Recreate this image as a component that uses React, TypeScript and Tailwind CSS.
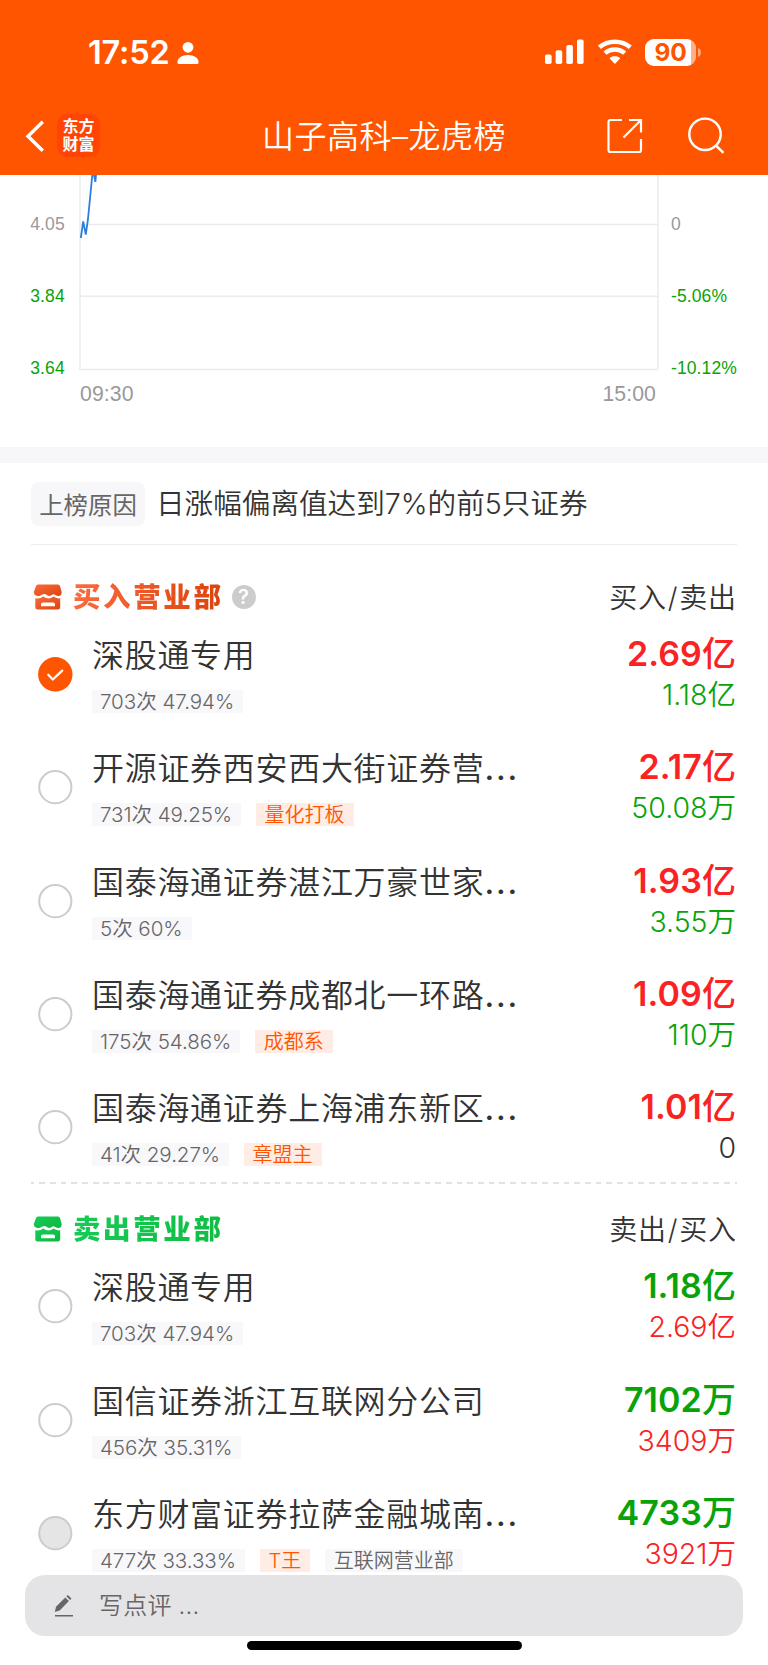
import React from "react";

type Tag = { text: string; tone: "hot" | "plain" };
type Seat = {
  name: string;
  stat: string;
  tags?: Tag[];
  main: string;
  sub: string;
  state?: "checked" | "disabled";
};

const buyers: Seat[] = [
  { name: "深股通专用", stat: "703次 47.94%", main: "2.69亿", sub: "1.18亿", state: "checked" },
  { name: "开源证券西安西大街证券营…", stat: "731次 49.25%", tags: [{ text: "量化打板", tone: "hot" }], main: "2.17亿", sub: "50.08万" },
  { name: "国泰海通证券湛江万豪世家…", stat: "5次 60%", main: "1.93亿", sub: "3.55万" },
  { name: "国泰海通证券成都北一环路…", stat: "175次 54.86%", tags: [{ text: "成都系", tone: "hot" }], main: "1.09亿", sub: "110万" },
  { name: "国泰海通证券上海浦东新区…", stat: "41次 29.27%", tags: [{ text: "章盟主", tone: "hot" }], main: "1.01亿", sub: "0" },
];

const sellers: Seat[] = [
  { name: "深股通专用", stat: "703次 47.94%", main: "1.18亿", sub: "2.69亿" },
  { name: "国信证券浙江互联网分公司", stat: "456次 35.31%", main: "7102万", sub: "3409万" },
  {
    name: "东方财富证券拉萨金融城南…",
    stat: "477次 33.33%",
    tags: [
      { text: "T王", tone: "hot" },
      { text: "互联网营业部", tone: "plain" },
    ],
    main: "4733万",
    sub: "3921万",
    state: "disabled",
  },
];

function StatusBar() {
  return (
    <div className="flex h-[104px] items-center justify-between pt-px pl-[88px] pr-[66px]">
      <div className="flex items-center">
        <span className="mt-[2px] w-[82px] text-[32.500px] leading-none font-semibold tracking-[-0.200px]">17:52</span>
        <svg className="ml-[7px]" width="22" height="24" viewBox="0 0 22 24" fill="white">
          <circle cx="11" cy="6.300" r="5.400" />
          <path d="M.4 21.4C.4 17 5 14.1 11 14.1S21.600 17 21.600 21.400C21.600 22.600 20.800 23 19.800 23H2.200C1.200 23 .4 22.600.4 21.400Z" />
        </svg>
      </div>
      <div className="flex items-center">
        <svg className="mt-[-1px]" width="40" height="26" viewBox="0 0 40 26" fill="white">
          <rect x="1" y="15.500" width="6.600" height="9.500" rx="1.800" />
          <rect x="11.600" y="11.300" width="6.600" height="13.700" rx="1.800" />
          <rect x="22.300" y="6" width="6.600" height="19" rx="1.800" />
          <rect x="33" y=".5" width="6.600" height="24.500" rx="1.800" />
        </svg>
        <svg className="mt-[-1px] ml-[13px]" width="36" height="26" viewBox="0 0 36 26" fill="none">
          <path d="M2.400 8.300C11 .8 24.700.8 33.300 8.300" stroke="white" strokeWidth="4.600" />
          <path d="M8 14.200C13.700 9.300 22 9.300 27.700 14.200" stroke="white" strokeWidth="4.400" />
          <path d="M12.500 19.300C15.500 16.700 20.200 16.700 23.200 19.300L17.900 25Z" fill="white" />
        </svg>
        <div className="mt-[-1px] ml-[12px] flex h-[27px] w-[51px] items-center justify-center rounded-[9px] bg-[linear-gradient(90deg,#fff_46px,#ffb08a_46px)] pt-px text-[24.500px] leading-none font-bold tracking-[-0.300px] text-[#ff5500]">
          90
        </div>
        <svg className="ml-[2px]" width="4" height="9" viewBox="0 0 4 9" fill="#ffa880">
          <path d="M0 0C4 1.500 4 7.500 0 9Z" />
        </svg>
      </div>
    </div>
  );
}

function NavBar() {
  return (
    <div className="flex h-[71px] items-start">
      <svg className="mt-[16px] ml-[25px]" width="20" height="33" viewBox="0 0 20 33" fill="none" stroke="white" strokeWidth="3.400">
        <path d="M17.800 1.800 3 16.200 17.800 30.700" />
      </svg>
      <div className="mt-[10px] ml-[12px] flex h-[43px] w-[43px] flex-col items-center justify-center rounded-[10px] bg-[#ff4405] text-[16px] leading-[17.500px] font-bold">
        <span>东方</span>
        <span>财富</span>
      </div>
      <h1 className="mt-[10px] ml-[162px] w-[246px] text-[32px] leading-[46px] font-[350] tracking-[0.500px] whitespace-nowrap">山子高科–龙虎榜</h1>
      <svg className="mt-[14px] ml-[98.500px]" width="36" height="36" viewBox="0 0 36 36" fill="none" stroke="white" strokeWidth="2.200">
        <path d="M15 2H3.500Q1.500 2 1.500 4V32Q1.500 34 3.500 34H32Q34 34 34 32V21M22 2H34V14.500M33.500 2.500 16.500 19.500" />
      </svg>
      <svg className="mt-[13px] ml-[44px]" width="38" height="38" viewBox="0 0 38 38" fill="none" stroke="white" strokeWidth="2.400">
        <circle cx="18" cy="17.300" r="15.700" />
        <path d="m28.800 28.300 7.700 7.500" />
      </svg>
    </div>
  );
}

function Chart() {
  return (
    <section className="flex h-[272px] font-[Liberation_Sans,Arial,sans-serif] text-[17.500px] leading-[20px]">
      <div className="flex w-[65px] flex-col items-end pt-[39px] text-[#09a309]">
        <span className="tracking-[0.200px] text-[#999]">4.05</span>
        <span className="mt-[52px] tracking-[0.200px]">3.84</span>
        <span className="mt-[52px] tracking-[0.200px]">3.64</span>
      </div>
      <div className="ml-[14px] w-[581px]">
        <svg className="block" width="581" height="196" viewBox="0 0 581 196" fill="none">
          <path d="M1 0V194.500M579 0V194.500M0 49.500H579M0 121.300H579M0 194.500H579" stroke="#ebebeb" strokeWidth="1.500" />
          <path d="M1.800 63 4.200 46.500 6.800 59.500 9 44 13.300 0M15 0 16.400 7M16.400 7 17 0" stroke="#2c7fe0" strokeWidth="1.800" />
        </svg>
        <div className="mt-[11px] flex justify-between pr-[4px] pl-[1px] text-[21.200px] leading-[24px] tracking-[0.100px] text-[#999]">
          <span>09:30</span>
          <span>15:00</span>
        </div>
      </div>
      <div className="flex flex-col pt-[39px] pl-[11px] text-[#09a309]">
        <span className="text-[#999]">0</span>
        <span className="mt-[52px] tracking-[0.100px]">-5.06%</span>
        <span className="mt-[52px] tracking-[0.100px]">-10.12%</span>
      </div>
    </section>
  );
}

function Shop({ color, dark }: { color: string; dark: string }) {
  const id = "shop" + color.slice(1);
  return (
    <svg className="ml-[1px]" width="30" height="26" viewBox="0 0 30 26">
      <defs>
        <linearGradient id={id} x1="0" y1="0" x2="1" y2="1">
          <stop offset="0" stopColor={color} />
          <stop offset="1" stopColor={dark} />
        </linearGradient>
      </defs>
      <path fill={"url(#" + id + ")"} d="M5 .5H25Q26.500.5 27 2L28.700 8Q28.700 11.800 25.500 12Q23.500 12 22 10.700Q20.500 9.700 19 10.700Q17 12.600 14.700 11.500L12.500 10.300Q10.500 9.400 8.500 11Q7 12.300 4.500 12Q.8 11.500.8 8L3 2Q3.500.5 5 .5Z" />
      <path fill={"url(#" + id + ")"} fillRule="evenodd" d="M2.300 14.200Q7 15 10.300 12.500Q15.500 16.500 20.500 12.600Q23.500 15 27.200 14.200V23Q27.200 25.500 25 25.500H4.500Q2.300 25.500 2.300 23ZM10 18.400Q8 18.400 8 20V22.300H22V20Q22 18.400 20 18.400Z" />
    </svg>
  );
}

function SectionHead({ kind }: { kind: "buy" | "sell" }) {
  const buy = kind === "buy";
  return (
    <div className="flex h-[46px] items-center pl-px">
      <Shop color={buy ? "#f86a3c" : "#18cb58"} dark={buy ? "#df450d" : "#0cb840"} />
      <h2
        className={
          "ml-[10px] bg-clip-text text-[27.500px] leading-[40px] font-black tracking-[2.600px] text-transparent " +
          (buy ? "bg-[linear-gradient(90deg,#fa6b41,#dd430b)]" : "bg-[linear-gradient(90deg,#17ca55,#0fbd43)]")
        }
      >
        {buy ? "买入营业部" : "卖出营业部"}
      </h2>
      {buy && (
        <span className="ml-[8px] flex h-[24px] w-[24px] items-center justify-center rounded-full bg-[#ccc] text-[20px] leading-none font-semibold text-white">?</span>
      )}
      <span className="mt-[2px] ml-auto text-[28px] leading-[40px] font-[350] tracking-[0.900px] text-[#333]">
        {buy ? "买入" : "卖出"}
        <span className="px-[0.800px]">/</span>
        {buy ? "卖出" : "买入"}
      </span>
    </div>
  );
}

function Radio({ state }: { state?: Seat["state"] }) {
  if (state === "checked")
    return (
      <svg width="36" height="36" viewBox="0 0 36 36" fill="none">
        <circle cx="18.300" cy="18.300" r="17.200" fill="#ff5500" />
        <path d="m11.300 18.800 4.500 4.700 9.400-8.900" stroke="white" strokeWidth="2.300" strokeLinecap="round" strokeLinejoin="round" />
      </svg>
    );
  return (
    <svg width="36" height="36" viewBox="0 0 36 36" fill="none">
      <circle cx="18.300" cy="18.200" r="16.100" stroke="#ccc" strokeWidth="2" fill={state ? "#e5e5e5" : "white"} />
    </svg>
  );
}

function SeatRow({ seat, kind }: { seat: Seat; kind: "buy" | "sell" }) {
  const mainColor = kind === "buy" ? "text-[#f92323]" : "text-[#09a309]";
  const subColor = seat.sub === "0" ? "text-[#333]" : kind === "buy" ? "text-[#09a309]" : "text-[#f92323]";
  const clipped = seat.name.endsWith("…");
  return (
    <li className="flex h-[113.300px]">
      <div className="w-[61px] pt-[20px] pl-[6px]">
        <Radio state={seat.state} />
      </div>
      <div className="w-[440px] whitespace-nowrap">
        <div className="h-[54px] pt-px text-[32px] leading-[38px] font-[350] tracking-[0.700px] text-[#333]">
          {clipped ? seat.name.slice(0, -1) : seat.name}
          {clipped && <span className="font-medium tracking-[1.900px]">...</span>}
        </div>
        <div className="flex gap-[15px] text-[20px] leading-[25px]">
          <span className="h-[23px] bg-[#f8f8fb] pr-[9px] pl-[8px] text-[20.600px] leading-[24px] font-[350] tracking-[-0.080px] text-[#666]">{seat.stat}</span>
          {seat.tags?.map((t) => (
            <span key={t.text} className={"h-[23px] pr-[9px] pl-[8.500px] font-[350] " + (t.tone === "hot" ? "bg-[#ffece4] text-[#ff5500]" : "bg-[#f8f8fb] text-[#666]")}>
              {t.text}
            </span>
          ))}
        </div>
      </div>
      <div className="flex flex-1 flex-col items-end pr-px">
        <span className={"h-[39px] text-[34px] leading-[35px] font-semibold tracking-[0.100px] " + mainColor}>
          {seat.main.slice(0, -1)}
          <span className="font-medium">{seat.main.slice(-1)}</span>
        </span>
        <span className={"text-[28.500px] leading-[39px] font-[350] " + subColor}>{seat.sub}</span>
      </div>
    </li>
  );
}

function Composer() {
  return (
    <footer className="absolute inset-x-0 bottom-0 flex h-[90px] flex-col items-center bg-[linear-gradient(transparent_30px,#fff_30px)]">
      <div className="flex h-[61px] w-[718px] items-center rounded-[20px] bg-[#e4e4e6] pl-[29px] text-[24px] text-[#666]">
        <svg width="20" height="24" viewBox="0 0 20 24" fill="#666">
          <path d="M2 12.800 11.300 3.500 14.900 7.100 5.700 16.400.8 18ZM12.400 2.300 13.800.9 17.500 4.600 16.100 6ZM1 21H19V22.600H1Z" />
        </svg>
        <span className="ml-[25px] font-[350] tracking-[0.200px]">写点评 ...</span>
      </div>
      <div className="mt-[5px] h-[9px] w-[275px] rounded-full bg-black" />
    </footer>
  );
}

export default function App() {
  return (
    <div className="relative h-[1665px] w-[768px] overflow-hidden bg-white font-[Inter,'Noto_Sans_CJK_SC',sans-serif]" lang="zh-CN">
      <header className="h-[175px] bg-[#ff5500] text-white">
        <StatusBar />
        <NavBar />
      </header>
      <Chart />
      <div className="h-[16px] bg-[#f7f7fa]" />
      <main className="px-[31px]">
        <div className="flex h-[82px] items-start border-b border-[#ececec] pt-[19px]">
          <span className="flex h-[44px] w-[114px] items-center justify-center rounded-[8px] bg-[#f7f7fa] pt-[2px] text-[24.400px] font-normal text-[#666]">上榜原因</span>
          <span className="ml-[11px] pt-px text-[28.600px] leading-[41px] font-[350] text-[#333]">日涨幅偏离值达到7%的前5只证券</span>
        </div>
        <div className="pt-[29px]">
          <SectionHead kind="buy" />
          <ul className="pt-[16px]">
            {buyers.map((s) => (
              <SeatRow key={s.name} seat={s} kind="buy" />
            ))}
          </ul>
        </div>
        <div className="mt-[-20px] h-[2px] bg-[repeating-linear-gradient(90deg,#e2e2e2_0_3.300px,transparent_3.300px_8.300px,#e2e2e2_8.300px_10.700px)]" />
        <div className="pt-[22px]">
          <SectionHead kind="sell" />
          <ul className="pt-[16px]">
            {sellers.map((s) => (
              <SeatRow key={s.name} seat={s} kind="sell" />
            ))}
          </ul>
        </div>
      </main>
      <Composer />
    </div>
  );
}
